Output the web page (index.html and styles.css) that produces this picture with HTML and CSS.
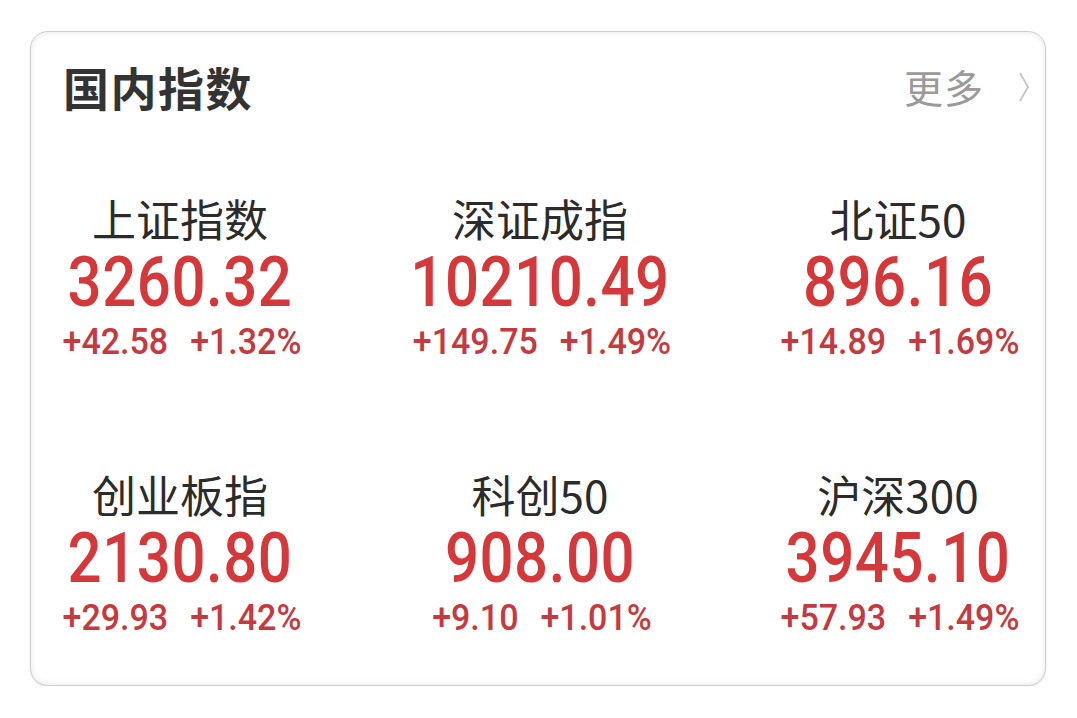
FILE: index.html
```html
<!DOCTYPE html>
<html lang="zh-CN">
<head>
<meta charset="utf-8">
<title>国内指数</title>
<link rel="stylesheet" href="styles.css">
</head>
<body>
<section class="card">
  <header class="card-head">
    <h1 class="title">国内指数</h1>
    <a class="more">更多<svg class="chev" width="12" height="32" viewBox="0 0 12 32"><path d="M2 2 L10 16 L2 30" fill="none" stroke="#c4c4c4" stroke-width="1.8"/></svg></a>
  </header>
  <div class="grid">
    <div class="cell">
      <div class="name">上证指数</div>
      <div class="value"><span>3260.32</span></div>
      <div class="change"><span>+42.58</span><span>+1.32%</span></div>
    </div>
    <div class="cell">
      <div class="name">深证成指</div>
      <div class="value"><span>10210.49</span></div>
      <div class="change"><span>+149.75</span><span>+1.49%</span></div>
    </div>
    <div class="cell">
      <div class="name">北证50</div>
      <div class="value"><span>896.16</span></div>
      <div class="change"><span>+14.89</span><span>+1.69%</span></div>
    </div>
    <div class="cell">
      <div class="name">创业板指</div>
      <div class="value"><span>2130.80</span></div>
      <div class="change"><span>+29.93</span><span>+1.42%</span></div>
    </div>
    <div class="cell">
      <div class="name">科创50</div>
      <div class="value"><span>908.00</span></div>
      <div class="change"><span>+9.10</span><span>+1.01%</span></div>
    </div>
    <div class="cell">
      <div class="name">沪深300</div>
      <div class="value"><span>3945.10</span></div>
      <div class="change"><span>+57.93</span><span>+1.49%</span></div>
    </div>
  </div>
</section>
</body>
</html>
```

FILE: styles.css
```css
html, body {
  margin: 0;
  padding: 0;
  background: #ffffff;
}
body {
  font-family: "Noto Sans CJK SC", "Noto Sans", sans-serif;
  color: #2e2e2e;
}
.card {
  box-sizing: border-box;
  margin: 31px 0 0 30px;
  width: 1016px;
  height: 655px;
  border: 1px solid #cfcfcf;
  border-radius: 18px;
  background: #fff;
  box-shadow: inset 0 0 7px rgba(0, 0, 0, 0.10), 0 1px 2px rgba(0, 0, 0, 0.12);
  overflow: hidden;
}
.card-head {
  display: flex;
  align-items: center;
  justify-content: space-between;
  margin-top: 26px;
  height: 56px;
  padding: 0 15px 0 32px;
}
.title {
  margin: 0;
  font-size: 46px;
  line-height: 56px;
  font-weight: 700;
  color: #333;
  letter-spacing: 1.5px;
}
.more {
  display: flex;
  align-items: center;
  gap: 34px;
  font-size: 39px;
  line-height: 56px;
  color: #9a9a9a;
  letter-spacing: 1px;
}
.chev {
  display: block;
  margin-top: 2px;
}
.grid {
  display: grid;
  grid-template-columns: 300px 420px 296px;
  row-gap: 101px;
  margin-top: 72px;
  margin-left: -1px;
}
.cell {
  display: flex;
  flex-direction: column;
  align-items: center;
}
.name {
  font-size: 44px;
  line-height: 64px;
  height: 64px;
  color: #2b2b2b;
}
.value {
  display: flex;
  align-items: center;
  height: 66px;
  font-family: Roboto, "Noto Sans", sans-serif;
  font-weight: 500;
  font-size: 60px;
  line-height: 50px;
  color: #d4383a;
  letter-spacing: 0.5px;
}
.value span {
  display: inline-block;
  transform: scaleY(1.17);
}
.change {
  display: flex;
  align-items: center;
  gap: 22px;
  margin-top: 5px;
  height: 40px;
  padding-left: 4px;
  font-family: Roboto, "Noto Sans", sans-serif;
  font-weight: 500;
  font-size: 34px;
  line-height: 30px;
  color: #c53a40;
}
.change span {
  display: inline-block;
  transform: scaleY(1.06);
}
```
